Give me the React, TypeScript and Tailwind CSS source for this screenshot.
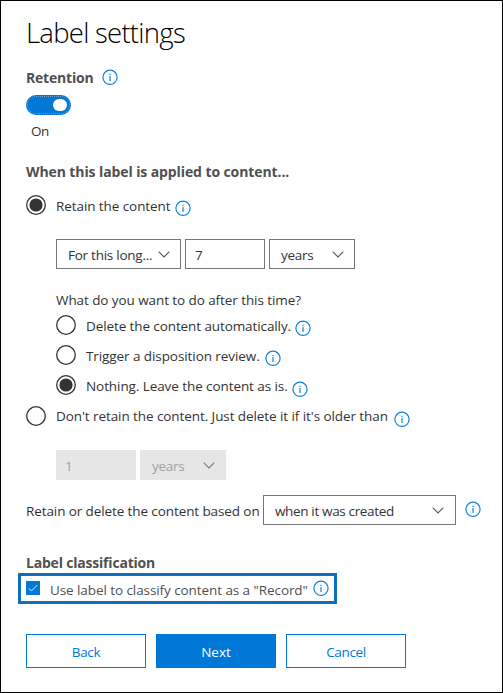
import React from 'react';

function Info({ className = '' }: { className?: string }) {
  return (
    <svg className={`block size-4 shrink-0 ${className}`} viewBox="0 0 16 16" aria-label="Info">
      <circle cx="8" cy="8.3" r="7.1" fill="none" stroke="#1080dc" strokeWidth="1.2" />
      <rect x="7.4" y="4.8" width="1.2" height="1.3" fill="#1080dc" />
      <rect x="7.4" y="7.1" width="1.2" height="4.8" fill="#1080dc" />
    </svg>
  );
}

function Chevron({ className = 'text-[#555]' }: { className?: string }) {
  return (
    <svg className={`block h-[7px] w-3 shrink-0 ${className}`} viewBox="0 0 12 7">
      <path d="M0.7 0.7 L6 6 L11.3 0.7" fill="none" stroke="currentColor" strokeWidth="1.1" />
    </svg>
  );
}

function Radio({ checked = false }: { checked?: boolean }) {
  return (
    <svg role="radio" aria-checked={checked} className="block size-5 shrink-0" viewBox="0 0 20 20">
      <circle cx="10" cy="10" r="9.3" fill="white" stroke="#333" strokeWidth="1.3" />
      {checked && <circle cx="10" cy="10" r="6.6" fill="#333" />}
    </svg>
  );
}

function Select({ label, text, className }: { label: string; text: string; className: string }) {
  return (
    <div className={`flex h-[30px] items-center justify-between border border-[#767676] pl-[11px] ${className}`}>
      <span className={`mt-0.5 ${text}`}>{label}</span>
      <Chevron />
    </div>
  );
}

export default function App() {
  return (
    <div className="flex h-[693px] w-[503px] flex-col border border-black bg-white pl-[25px] font-['Open_Sans','Noto_Sans',sans-serif] text-[13.5px] leading-5 tracking-[-0.08px] whitespace-nowrap text-[#333]">
      <h1 className="mt-3 h-10 font-['Open_Sans_Light','Noto_Sans_Light','Open_Sans',sans-serif] text-[27.5px] leading-10 font-light tracking-[-0.75px] text-black">Label settings</h1>

      <div className="mt-[15px] flex h-5">
        <span className="w-[67px] text-[14px] font-bold tracking-[-0.2px] text-[#505050]">Retention</span>
        <Info className="mt-px ml-[9px]" />
      </div>
      <div className="mt-[7px] flex h-5 w-[45px] items-center justify-end rounded-full bg-[#0078d7] pr-1 outline-1 -outline-offset-2 outline-dotted outline-[#6f9fc8]">
        <span className="h-3 w-3.5 rounded-full bg-white" />
      </div>
      <div className="mt-[6px] h-5 pl-[5px] tracking-[-0.4px]">On</div>

      <h2 className="mt-[21px] h-5 text-[14px] font-bold tracking-[-0.1px] text-[#505050]">When this label is applied to content...</h2>

      <div className="mt-[13px] flex h-5">
        <Radio checked />
        <span className="mt-px ml-2.5">Retain the content</span>
        <Info className="mt-[5px] ml-1" />
      </div>
      <div className="mt-6 flex gap-1 pl-[30px]">
        <Select label="For this long..." text="tracking-[-0.25px]" className="w-[125px] pr-[10px]" />
        <div className="flex h-[30px] w-20 items-center border border-[#767676] pl-[9px]">
          <span className="mt-0.5">7</span>
        </div>
        <Select label="years" text="tracking-[-0.3px]" className="w-[86px] pr-[10px]" />
      </div>

      <div className="pl-[30px]">
        <div className="mt-[21px] h-5">What do you want to do after this time?</div>
        <div className="mt-[5px] flex flex-col gap-2.5">
          <div className="flex h-5">
            <Radio />
            <span className="mt-px ml-2.5 tracking-[-0.1px]">Delete the content automatically.</span>
            <Info className="mt-[5px] ml-1" />
          </div>
          <div className="flex h-5">
            <Radio />
            <span className="mt-px ml-2.5">Trigger a disposition review.</span>
            <Info className="mt-[5px] ml-[5px]" />
          </div>
          <div className="flex h-5">
            <Radio checked />
            <span className="mt-px ml-2.5">Nothing. Leave the content as is.</span>
            <Info className="mt-1.5 ml-1" />
          </div>
        </div>
      </div>

      <div className="mt-[11px] flex h-5">
        <Radio />
        <span className="ml-2.5">Don't retain the content. Just delete it if it's older than</span>
        <Info className="mt-[5px] ml-1.5" />
      </div>
      <div className="mt-6 flex gap-1 pl-[30px] text-[#a0a0a0]">
        <div className="flex h-[30px] w-20 items-center bg-[#e6e6e6] pl-[9px]">
          <span className="mt-0.5">1</span>
        </div>
        <div className="flex h-[30px] w-[86px] items-center justify-between bg-[#e6e6e6] pr-[11px] pl-3">
          <span className="mt-0.5 tracking-[-0.3px]">years</span>
          <Chevron className="text-[#777]" />
        </div>
      </div>

      <div className="mt-[15px] flex h-[30px]">
        <span className="mt-1.5 w-[237px] tracking-[-0.1px]">Retain or delete the content based on</span>
        <Select label="when it was created" text="tracking-[-0.35px]" className="w-[193px] pr-[11px]" />
        <Info className="mt-1.5 ml-[9px]" />
      </div>

      <h2 className="mt-7 h-5 text-[14px] font-bold tracking-[-0.2px] text-[#505050]">Label classification</h2>
      <div className="-ml-2 flex h-[31px] w-[319px] border-3 border-[#106ebe] pl-[5px]">
        <span role="checkbox" aria-checked="true" className="mt-[5px] flex size-3.5 items-center justify-center bg-[#0078d7]">
          <svg className="size-3" viewBox="0 0 12 12">
            <path d="M1.8 6.3 L4.4 9 L10.3 3" fill="none" stroke="white" strokeWidth="0.9" />
          </svg>
        </span>
        <span className="mt-1 ml-2.5 text-[#505050]">Use label to classify content as a "Record"</span>
        <Info className="mt-1 ml-[5px]" />
      </div>

      <div className="mt-[30px] flex gap-2.5 tracking-[-0.35px] text-[#0078d7]">
        <button className="h-[34px] w-[120px] border border-[#0078d7] pt-px">Back</button>
        <button className="h-[34px] w-[120px] bg-[#0078d7] pt-px tracking-normal text-white">Next</button>
        <button className="h-[34px] w-[120px] border border-[#0078d7] pt-px">Cancel</button>
      </div>
    </div>
  );
}
